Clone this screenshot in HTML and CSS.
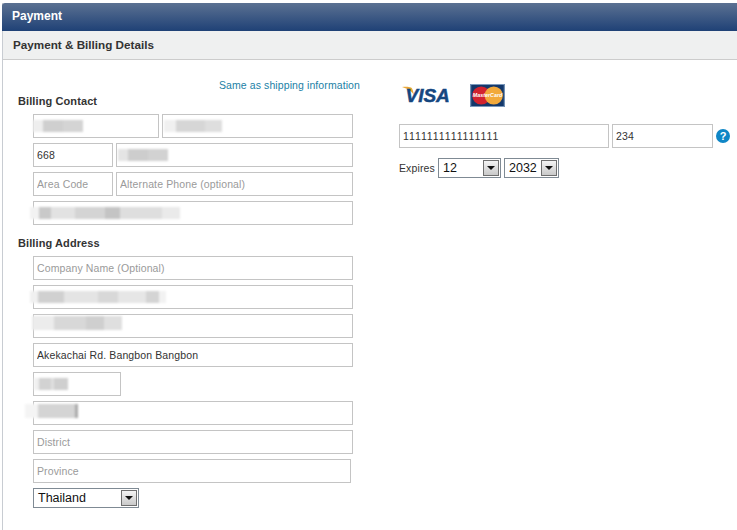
FILE: index.html
```html
<!DOCTYPE html>
<html lang="en">

<head>
  <meta charset="UTF-8">
  <title>Payment</title>
  <link rel="stylesheet" href="styles.css">
</head>

<body>
  <div class="panel">
    <div class="panel-title">Payment</div>
    <div class="panel-sub">Payment &amp; Billing Details</div>

    <div class="panel-body">
      <div class="billing-col">
        <div class="same-link"><a href="#">Same as shipping information</a></div>

        <h4 class="group-label">Billing Contact</h4>
        <div class="rows">
          <div class="row">
            <div class="field w-first"><input type="text"><span class="smudge sm-first"></span></div>
            <div class="field grow"><input type="text"><span class="smudge sm-last"></span></div>
          </div>
          <div class="row">
            <div class="field w-code"><input type="text" value="668"></div>
            <div class="field grow"><input type="text"><span class="smudge sm-phone"></span></div>
          </div>
          <div class="row">
            <div class="field w-code"><input type="text" placeholder="Area Code"></div>
            <div class="field grow"><input type="text" placeholder="Alternate Phone (optional)"></div>
          </div>
          <div class="row">
            <div class="field grow"><input type="text"><span class="smudge sm-email"></span></div>
          </div>
        </div>

        <h4 class="group-label address-label">Billing Address</h4>
        <div class="rows">
          <div class="row">
            <div class="field grow"><input type="text" placeholder="Company Name (Optional)"></div>
          </div>
          <div class="row">
            <div class="field grow"><input type="text"><span class="smudge sm-addr1"></span></div>
          </div>
          <div class="row">
            <div class="field grow"><input type="text"><span class="smudge sm-addr2"></span></div>
          </div>
          <div class="row">
            <div class="field grow"><input type="text" value="Akekachai Rd. Bangbon Bangbon"></div>
          </div>
          <div class="row">
            <div class="field w-zip"><input type="text"><span class="smudge sm-zip"></span></div>
          </div>
          <div class="row">
            <div class="field grow"><input type="text"><span class="smudge sm-city"></span></div>
          </div>
          <div class="row">
            <div class="field grow"><input type="text" placeholder="District"></div>
          </div>
          <div class="row">
            <div class="field w-province"><input type="text" placeholder="Province"></div>
          </div>
          <div class="row">
            <div class="dropdown w-country">
              <span class="dropdown-value">Thailand</span>
              <span class="dropdown-btn"><i></i></span>
            </div>
          </div>
        </div>
      </div>

      <div class="card-col">
        <div class="card-logos">
          <svg class="logo-visa" width="48" height="22" viewBox="0 0 48 22">
            <path d="M1 3 C4 2.5 8 2.5 10 3.5 C11 4 11.5 5 12 7 L13 11 C11 7.500 7 4.500 1 3 Z" fill="#e9a838" />
            <text x="4.5" y="18" class="visa-text">VISA</text>
          </svg>
          <svg class="logo-mc" width="35" height="23" viewBox="0 0 36 24">
            <rect x="0" y="0" width="36" height="24" fill="#14386b" />
            <rect x="0.5" y="0.5" width="35" height="23" fill="none" stroke="#7f9dc0" />
            <circle cx="11.500" cy="12" r="9.500" fill="#d2232f" />
            <circle cx="24.500" cy="12" r="9.500" fill="#f2a93b" />
            <text x="18" y="14" class="mc-text" text-anchor="middle">MasterCard</text>
          </svg>
        </div>

        <div class="card-row">
          <div class="field w-card"><input type="text" value="1111111111111111"></div>
          <div class="field w-cvv"><input type="text" value="234"></div>
          <span class="help-icon">?</span>
        </div>

        <div class="expires-row">
          <label class="expires-label">Expires</label>
          <div class="dropdown w-month">
            <span class="dropdown-value">12</span>
            <span class="dropdown-btn"><i></i></span>
          </div>
          <div class="dropdown w-year">
            <span class="dropdown-value">2032</span>
            <span class="dropdown-btn"><i></i></span>
          </div>
        </div>
      </div>
    </div>
  </div>
</body>

</html>
```

FILE: styles.css
```css
body {
  margin: 0;
  padding: 3px 0 0 2px;
  background: #fff;
  font-family: "Liberation Sans", Arial, sans-serif;
  font-size: 12px;
  color: #333;
  overflow: hidden;
}

.panel {
  width: 735px;
  height: 527px;
  border-left: 1px solid #c8ccd2;
  box-sizing: border-box;
}

.panel-title {
  height: 28px;
  margin-left: -1px;
  padding-left: 10px;
  line-height: 27px;
  font-size: 12px;
  font-weight: bold;
  color: #fff;
  background: linear-gradient(#5b7192, #1f4176);
  border-top-left-radius: 3px;
}

.panel-sub {
  height: 28px;
  padding-left: 10px;
  line-height: 28px;
  font-size: 11.7px;
  font-weight: bold;
  color: #333;
  background: #eff0f0;
  border-bottom: 1px solid #ccc;
}

.panel-body {
  display: flex;
}

.billing-col {
  width: 396px;
  flex: none;
}

.same-link {
  width: 357px;
  margin-top: 18px;
  height: 14px;
  line-height: 14px;
  text-align: right;
  font-size: 10.5px;
  letter-spacing: 0.1px;
}

.same-link a {
  color: #1b7fa6;
  text-decoration: none;
}

.group-label {
  margin: 2px 0 6px 15px;
  height: 14px;
  line-height: 14px;
  font-size: 11px;
  font-weight: bold;
  letter-spacing: 0.1px;
  color: #333;
}

.address-label {
  margin-top: 11px;
}

.rows {
  display: flex;
  flex-direction: column;
  gap: 5px;
  width: 320px;
  margin-left: 30px;
}

.row {
  display: flex;
  gap: 3px;
}

.field {
  position: relative;
  height: 24px;
}

.field input {
  display: block;
  width: 100%;
  height: 24px;
  box-sizing: border-box;
  margin: 0;
  padding: 0 3px;
  border: 1px solid #c4c4c4;
  outline: none;
  background: #fff;
  font-family: inherit;
  font-size: 10.5px;
  font-kerning: none;
  letter-spacing: 0.12px;
  color: #333;
}

.field input::placeholder {
  color: #9a9a9a;
  opacity: 1;
}

.grow { flex: 1; }
.w-first { width: 126px; }
.w-code { width: 80px; }
.w-zip { width: 88px; }
.w-province { width: 318px; }
.w-card { width: 210px; }
.w-cvv { width: 101px; }
.w-country { width: 106px; }
.w-month { width: 63px; }
.w-year { width: 55px; }

/* blurred-out personal data, sits on top of the inputs */
.smudge {
  position: absolute;
  top: 6px;
  height: 12px;
  filter: blur(0.9px);
}

.sm-first {
  left: 0;
  width: 50px;
  background: linear-gradient(90deg, #eeeeee 20%, #cfcfcf 20% 60%, #d4d4d4 60%);
}

.sm-last {
  left: 2px;
  width: 58px;
  background: linear-gradient(90deg, #f0f0f0 20%, #d6d6d6 20% 70%, #dedede 70%);
}

.sm-phone {
  left: 2px;
  width: 50px;
  background: linear-gradient(90deg, #e4e4e4 20%, #cdcdcd 20% 60%, #d2d2d2 60%);
}

.sm-email {
  left: -3px;
  width: 150px;
  background: linear-gradient(90deg, #f2f2f2 6%, #c9c9c9 6% 14%, #e2e2e2 14% 30%, #d4d4d4 30% 50%, #c4c4c4 50% 60%, #dedede 60% 88%, #eaeaea 88%);
}

.sm-addr1 {
  left: -3px;
  width: 136px;
  background: linear-gradient(90deg, #f0f0f0 6%, #d0d0d0 6% 25%, #e4e4e4 25% 50%, #d8d8d8 50% 65%, #e6e6e6 65% 85%, #d4d4d4 85% 95%, #f2f2f2 95%);
}

.sm-addr2 {
  left: -1px;
  width: 90px;
  top: 2px;
  height: 14px;
  background: linear-gradient(90deg, #ececec 25%, #d8d8d8 25% 60%, #cfcfcf 60% 80%, #dfdfdf 80%);
}

.sm-zip {
  left: 1px;
  width: 34px;
  background: linear-gradient(90deg, #f0f0f0 15%, #d2d2d2 15% 50%, #e0e0e0 50% 60%, #cfcfcf 60%);
}

.sm-city {
  left: -8px;
  width: 53px;
  top: 3px;
  height: 14px;
  background: linear-gradient(90deg, #f4f4f4 25%, #d4d4d4 25% 95%, #aaa 95%);
}

/* old style select box */
.dropdown {
  display: flex;
  align-items: center;
  justify-content: space-between;
  height: 20px;
  box-sizing: border-box;
  padding: 1px;
  border: 1px solid #7f8a94;
  background: #fff;
  font-size: 12.5px;
  color: #111;
}

.dropdown-value {
  padding-left: 3px;
}

.dropdown-btn {
  display: flex;
  align-items: center;
  justify-content: center;
  width: 16px;
  height: 16px;
  border: 1px solid #6f6f6f;
  box-sizing: border-box;
  background: linear-gradient(#f4f4f4, #c9c9c9);
}

.dropdown-btn i {
  width: 0;
  height: 0;
  border-left: 4px solid transparent;
  border-right: 4px solid transparent;
  border-top: 4px solid #111;
}

.card-logos {
  display: flex;
  align-items: flex-start;
  gap: 21px;
  margin: 23px 0 0 2px;
  height: 41px;
}

.logo-visa,
.logo-mc {
  margin-top: 1px;
}

.visa-text {
  font-family: "Liberation Sans", Arial, sans-serif;
  font-size: 19px;
  font-weight: bold;
  font-style: italic;
  fill: #15467f;
  stroke: #15467f;
  stroke-width: 0.5px;
}

.mc-text {
  font-family: "Liberation Sans", Arial, sans-serif;
  font-size: 5.6px;
  font-weight: bold;
  font-style: italic;
  fill: #fff;
}

.card-row {
  display: flex;
  align-items: center;
  gap: 3px;
}

.help-icon {
  width: 14px;
  height: 14px;
  border-radius: 50%;
  background: #0f86c6;
  color: #fff;
  font-size: 11px;
  font-weight: bold;
  line-height: 14px;
  text-align: center;
}

.expires-row {
  display: flex;
  align-items: center;
  gap: 3px;
  margin-top: 10px;
}

.expires-label {
  width: 36px;
  font-size: 10.5px;
  letter-spacing: 0.12px;
}
```
